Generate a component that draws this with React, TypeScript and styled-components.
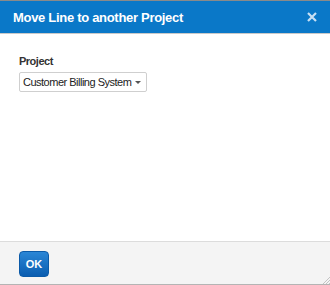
import React from "react";
import styled, { createGlobalStyle } from "styled-components";

const Global = createGlobalStyle`
  html, body { margin: 0; padding: 0; background: #fff; }
  body { font-family: Arial, "Liberation Sans", sans-serif; }
  * { box-sizing: border-box; }
`;

const Dialog = styled.div`
  width: 330px;
  height: 285px;
  display: flex;
  flex-direction: column;
  border-top: 1px solid #8a8a8a;
  border-bottom: 1px solid #b4b4b4;
  background: #fff;
`;

const Header = styled.div`
  height: 33px;
  background: #0a78c8;
  border-bottom: 1px solid #c9c9c9;
  display: flex;
  align-items: center;
  justify-content: space-between;
  padding: 0 12px 0 13px;
`;

const Title = styled.h1`
  margin: 0;
  font-size: 13px;
  letter-spacing: -0.3px;
  font-weight: bold;
  color: #fff;
`;

const Close = styled.button`
  border: 0;
  background: none;
  padding: 0;
  width: 12px;
  height: 12px;
  display: flex;
  cursor: pointer;
`;

const Body = styled.div`
  flex: 1;
  padding: 21px 19px;
  display: flex;
  flex-direction: column;
  align-items: flex-start;
`;

const Label = styled.label`
  font-size: 11px;
  letter-spacing: -0.5px;
  font-weight: bold;
  color: #333;
  margin-bottom: 5px;
`;

const Select = styled.div`
  height: 20px;
  display: flex;
  align-items: center;
  gap: 4px;
  padding: 0 5px 0 3px;
  border: 1px solid #cfcfcf;
  border-radius: 2px;
  font-size: 11px;
  letter-spacing: -0.5px;
  color: #222;
  background: #fff;
`;

const Caret = styled.span`
  width: 0;
  height: 0;
  border-left: 3px solid transparent;
  border-right: 3px solid transparent;
  border-top: 3px solid #555;
  margin-top: 1px;
`;

const Footer = styled.div`
  height: 43px;
  background: #f4f4f4;
  border-top: 1px solid #dcdcdc;
  display: flex;
  align-items: center;
  padding: 0 19px;
  position: relative;
`;

const OkButton = styled.button`
  width: 30px;
  height: 26px;
  border: 1px solid #0b5aa8;
  border-radius: 4px;
  background: linear-gradient(#2a86d6, #0a5db0);
  color: #fff;
  font-family: Arial, "Liberation Sans", sans-serif;
  font-size: 11px;
  font-weight: bold;
  padding: 0;
  margin-top: 1px;
`;

const Grip = styled.svg`
  position: absolute;
  right: 0;
  bottom: 0;
`;

export default function App() {
  return (
    <>
      <Global />
      <Dialog>
        <Header>
          <Title>Move Line to another Project</Title>
          <Close aria-label="Close">
            <svg width="12" height="12" viewBox="0 0 12 12">
              <path d="M2 2 L10 10 M10 2 L2 10" stroke="#c8e0f4" strokeWidth="2.2" strokeLinecap="butt" />
            </svg>
          </Close>
        </Header>
        <Body>
          <Label>Project</Label>
          <Select>
            Customer Billing System
            <Caret />
          </Select>
        </Body>
        <Footer>
          <OkButton>OK</OkButton>
          <Grip width="8" height="8" viewBox="0 0 8 8">
            <path d="M8 1 L1 8 M8 4 L4 8 M8 7 L7 8" stroke="#c4c4c4" strokeWidth="1" />
          </Grip>
        </Footer>
      </Dialog>
    </>
  );
}
